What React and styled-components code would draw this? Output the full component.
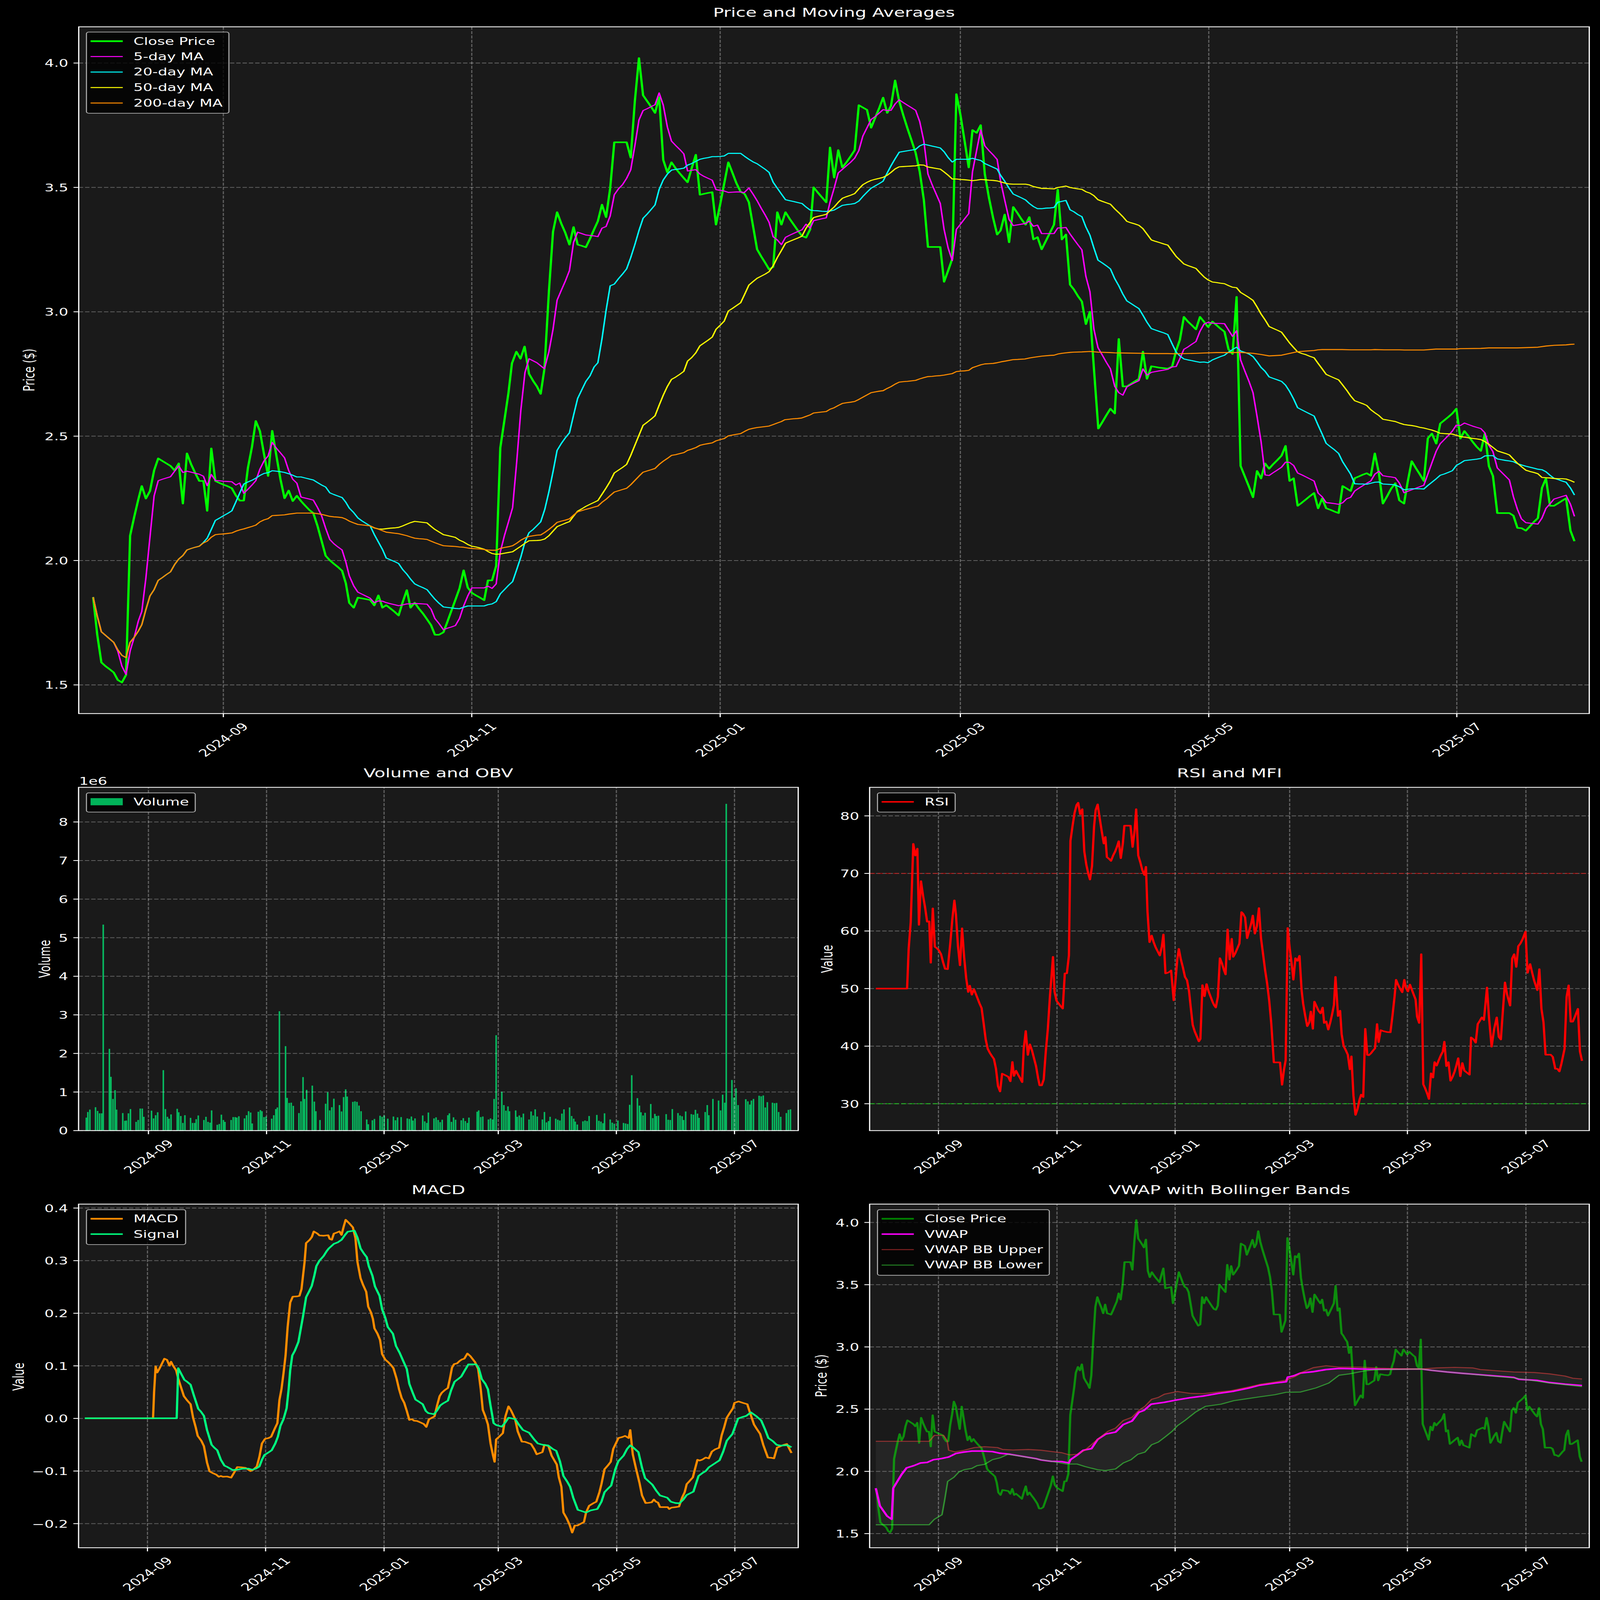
import React from "react";
import styled, { createGlobalStyle } from "styled-components";

const GlobalStyle = createGlobalStyle`
  html, body { margin: 0; padding: 0; background: #000; overflow: hidden; }
  body { font-family: "DejaVu Sans", sans-serif; color: #fff; }
`;

const Viewport = styled.main`
  width: 100vw;
  height: 100vh;
  overflow: hidden;
  background: #000;
`;
const Figure = styled.div`
  display: grid;
  grid-template-columns: 2235px 2235px;
  grid-template-rows: 3100px 1680px 1727px;
  width: 4470px;
  height: 6507px;
  background: #000;
  overflow: hidden;
  transform-origin: 0 0;
`;
const Panel = styled.section`
  position: relative;
  grid-column: ${(p) => (p.$wide ? "1 / span 2" : "auto")};
  display: flex;
  flex-direction: column;
`;
const Title = styled.h2`
  display: flex;
  justify-content: center;
  align-items: flex-end;
  box-sizing: border-box;
  flex: none;
  height: ${(p) => p.$height}px;
  margin: 0;
  padding: 0 ${(p) => p.$right}px 28px ${(p) => p.$left}px;
  font-size: 50px;
  line-height: 58px;
  font-weight: 400;
  white-space: nowrap;
`;
const Plot = styled.svg`
  display: block;
  flex: none;
  overflow: visible;
  text { fill: #fff; font-size: 41.67px; font-family: "DejaVu Sans", sans-serif; }
`;
const Legend = styled.ul`
  position: absolute;
  left: ${(p) => p.$left}px;
  top: ${(p) => p.$top}px;
  display: flex;
  flex-direction: column;
  margin: 0;
  padding: 4px 16px 9px 10px;
  list-style: none;
  background: rgba(0, 0, 0, 0.8);
  border: 3.33px solid #aaa;
  border-radius: 8px;
`;
const LegendRow = styled.li`
  display: flex;
  align-items: center;
  gap: 30px;
  height: 62.8px;
  font-size: 41.67px;
  white-space: nowrap;
`;
const Swatch = styled.span`
  flex: none;
  width: 90px;
  height: ${(p) => p.$size}px;
  background: ${(p) => p.$color};
`;

// crops of the picture the curves were read from: origin and scale
const tile = (ox, oy, fx, fy) => (s) =>
  s.trim().split(/\s+/).map((p) => {
    const [a, b] = p.split(",").map(Number);
    return [ox + a / fx, oy + b / fy];
  });
const T1 = tile(0, 0, 1.0453, 1.0453);
const T2 = tile(1500, 0, 1.0453, 1.0453);
const T3 = tile(3000, 0, 1.0667, 1.0453);
const T4 = tile(0, 1500, 1.0453, 0.98);
const T5 = tile(1500, 1500, 1.0453, 0.98);
const T6 = tile(3000, 1500, 1.0667, 0.98);
const VOL = tile(0, 3100, 0.6969, 0.9224);
const RSI = tile(2220, 3100, 0.6969, 0.9224);
const MAC = tile(0, 4780, 0.6969, 0.9079);
const VWP = tile(2220, 4780, 0.6969, 0.9079);

const close = [
  ...T4(`272,910 284,1060 296,1170 308,1185 320,1197 332,1210 344,1240 356,1250 368,1220 380,665 392,590 404,520 414,467 426,517 438,487 450,405 462,357 474,367 486,377 498,387 510,405 522,377 534,537 546,337 558,380 570,415 582,447 594,447 605,566 617,317 629,447 641,455 653,462 665,468 677,476 689,505 700,525 712,525 724,395 736,310 747,208 759,248 771,340 783,427 795,247 807,345 819,440 831,516 843,485 855,527 867,506 879,527 891,545 903,562 915,575 927,625 939,685 951,745 963,763 975,777 987,790 999,805 1010,855 1020,933 1033,952 1045,912 1057,915 1069,918 1081,921 1093,943 1105,903 1117,952 1128,942 1140,955 1152,968 1164,983 1176,930 1188,882 1199,952 1211,932 1223,955 1235,975 1247,998 1259,1022 1270,1060 1282,1060 1295,1050 1306,1010 1318,965 1330,920 1342,875 1354,803 1366,872 1378,893 1390,903 1402,912 1414,922 1425,843 1437,843 1449,785 1461,315 1473,205 1485,95`),
  ...T1(`1495,1545 1508,1495 1520,1525 1532,1473`),
  ...T4(`1545,20 1557,48`),
  ...T5(`0,70 11,100`),
  ...T2(`22,1568 35,1240 47,985 59,902 71,950 83,990 95,1040 107,965 119,1040 131,1045 143,1051 155,1015 167,975 178,940 190,870 202,923 214,800 226,605 238,605 250,605 262,605 274,670 286,430 298,247 310,405 322,430 334,455 345,480 357,413 369,680 381,733 393,690 405,715 417,737 429,757 440,775 452,715 464,658 476,828 488,824 500,820 512,817 523,955 535,870 547,780 559,690 571,735 583,780 595,815 607,825 619,860 631,960 643,1060 655,1090 667,1118 678,1145 690,1135 702,902 714,955 726,902 738,930 750,955 762,980 774,1003 786,1010 798,975 808,796 820,818 832,838 845,860 856,627 868,755 880,638 892,712 904,690 916,665 928,638 940,447 952,457 964,467 976,543 988,500 1000,458 1011,415 1023,480 1034,450 1046,342 1058,430 1070,490 1082,545 1094,597 1106,650 1118,730 1130,850 1142,1050 1154,1050 1166,1050 1178,1050 1189,1198 1201,1150 1213,1100 1225,400 1237,490 1249,600 1261,712 1272,553 1284,565 1296,532 1308,740 1320,840 1332,925 1344,997 1354,980 1366,912 1379,1030 1391,880 1403,905 1415,932 1427,955 1438,923 1450,1018 1462,1008 1474,1060 1486,1025 1498,990 1510,955 1521,806 1533,1018 1545,997 1557,1210`),
  ...T3(`0,1230 12,1258 24,1282 36,1378 48,1325`),
  ...T6(`60,0 73,238 85,212 97,185 109,159 122,178`),
  ...T3(`134,1441`),
  ...T6(`146,70 158,70 170,60 182,50 194,40`),
  ...T3(`206,1495`),
  ...T6(`218,40`),
  ...T3(`231,1557 243,1560 255,1563 268,1565 280,1567 293,1558 305,1490 316,1445 328,1347 340,1367 352,1383 364,1400 376,1347 388,1368 400,1390 413,1367 425,1382 437,1397 449,1410 461,1485 473,1505 485,1262`),
  ...T6(`497,387 510,430 522,470 534,512 546,407 558,437 570,377 582,398 594,380 607,363 619,346 631,307 643,447 655,436 667,546 680,533 692,520 704,507 716,495 728,556 740,517 752,556 765,562 777,569 789,575 801,467 813,477 825,487 837,436 849,429 861,422 873,416 885,426 897,337 909,415 921,537 934,507 946,477 958,456 970,524 984,537 995,450 1007,368 1019,395 1031,420 1043,447 1055,277 1067,258 1080,298 1092,218 1104,205 1116,192 1128,178 1140,159 1152,278 1164,248 1176,268 1188,290 1200,310 1213,327 1225,258 1237,388 1249,427 1262,575 1274,575 1286,575 1298,575 1310,585 1322,634 1334,635 1347,645 1359,628 1371,610 1383,595 1395,475 1407,437 1419,546 1431,546 1443,536 1455,526 1467,516 1480,645 1492,687`),
];

const ma5 = [
  ...T4(`272,910 284,985 296,1048 308,1062 320,1076 332,1090 344,1125 356,1185 368,1218 380,1125 392,1070 404,1005 414,967 426,835 438,670 450,507 462,446 474,440 486,435 498,430 510,408 522,387 534,413 546,408 558,412 570,416 582,420 594,428 605,466 617,421 629,445 641,446 653,448 665,449 677,450 689,463 700,455 712,496 724,480 736,463 747,446 759,400 771,367 783,347 795,293 807,316 819,335 831,355 843,405 855,440 867,456 879,511 891,515 903,519 915,523 927,552 939,585 951,635 963,680 975,697 987,710 999,722 1010,770 1020,825 1033,865 1045,890 1057,898 1069,906 1081,914 1093,932 1105,925 1117,926 1128,932 1140,936 1152,940 1164,944 1176,941 1188,937 1199,937 1211,935 1223,936 1235,937 1247,938 1259,958 1270,995 1282,1015 1295,1040 1306,1034 1318,1029 1330,1023 1342,995 1354,945 1366,905 1378,873 1390,873 1402,873 1414,873 1425,866 1437,875 1449,857 1461,730 1473,665 1485,610 1497,553 1509,370 1521,165 1533,15`),
  ...T1(`1545,1525`),
  ...T2(`0,1542 11,1555 22,1568 35,1495 47,1400 59,1276 71,1235 83,1195 95,1150 107,1030 119,987 131,993 143,999 155,1001 167,1003 178,1006 190,970 202,963 214,918 226,828 238,803 250,785 262,758 274,722 286,620 298,510 310,470 322,462 334,453 345,445 357,395 369,447 381,540 393,600 405,618 417,635 429,654 440,727 452,724 464,721 476,740 488,750 500,758 512,766 523,806 535,809 547,812 559,818 571,817 583,816 595,816 605,819 619,799 631,825 643,853 655,885 667,915 678,945 690,1007 702,1020 714,1040 726,1009 738,1000 750,992 762,984 774,977 786,953 798,970 808,938 820,934 832,930 845,926 856,860 868,800 880,735 892,720 904,705 916,690 928,672 940,640 952,578 964,543 976,508 988,495 1000,480 1011,466 1023,470 1034,469 1046,442 1058,424 1070,436 1082,447 1094,458 1106,469 1118,517 1130,600 1142,740 1154,785 1166,825 1178,865 1189,975 1201,1055 1213,1108 1225,975 1237,953 1249,930 1261,908 1272,730 1284,640 1296,552 1308,620 1320,640 1332,658 1344,678 1354,770 1366,850 1379,933 1391,959 1403,956 1415,953 1427,950 1438,940 1450,962 1462,957 1474,993 1486,993 1498,993 1510,993 1521,969 1533,969 1545,967 1557,995`),
  ...T3(`0,1017 12,1040 24,1062 36,1175 48,1240 60,1400 72,1478 85,1510 97,1540`),
  ...T6(`109,0 122,70 134,95 146,105 158,72 170,63 182,55 194,47 206,0 218,25 231,14 243,11 255,8 268,5 280,2`),
  ...T3(`293,1560 305,1558 316,1525 328,1485 340,1475 352,1463 364,1452 376,1408 388,1378 400,1370 413,1374 425,1375 437,1375 449,1376 461,1403 473,1430 485,1406 497,1530`),
  ...T6(`510,10 522,50 534,95 546,190 558,290 570,423 582,425 594,414 607,403 619,392 631,372 643,373 655,385 667,415 680,423 692,431 704,439 716,447 728,495 740,510 752,533 765,535 777,537 789,540 801,534 813,518 825,512 837,487 849,476 861,466 873,456 885,447 897,420 909,408 921,426 934,429 946,431 958,434 970,455 984,494 995,488 1007,482 1019,476 1031,470 1043,464 1055,420 1067,375 1080,328 1092,298 1104,282 1116,266 1128,248 1140,224 1152,226 1164,216 1176,222 1188,228 1200,233 1213,238 1225,255 1237,305 1249,330 1262,395 1274,411 1286,427 1298,443 1310,510 1322,560 1334,598 1347,613 1359,615 1371,617 1383,619 1395,595 1407,556 1419,538 1431,519 1443,514 1455,509 1467,504 1480,540 1492,588`),
];

const ma20 = [
  ...T4(`272,910 284,985 296,1048 308,1062 320,1076 332,1090 344,1120 356,1142 368,1151 380,1090 392,1070 404,1045 414,1020 426,960 438,905 450,880 462,843 474,832 486,820 498,809 510,780 522,758 534,744 546,722 558,716 570,711 582,707 594,692 605,675 617,640 629,604 641,595 653,585 665,576 677,566 689,530 700,495 712,459 724,451 736,444 747,436 759,425 771,417 783,414 795,406 807,408 819,410 831,413 843,418 855,424 867,431 879,431 891,435 903,439 915,443 927,453 939,463 951,471 963,494 975,501 987,507 999,513 1010,532 1020,555 1033,573 1045,594 1057,606 1069,616 1081,626 1093,660 1105,690 1117,720 1128,754 1140,761 1152,768 1164,776 1176,800 1188,818 1199,838 1211,857 1223,865 1235,872 1247,880 1259,900 1270,918 1282,934 1295,949 1306,951 1318,953 1330,955 1342,956 1354,950 1366,945 1378,945 1390,945 1402,945 1414,945 1425,940 1437,937 1449,928 1461,897 1473,880 1485,863 1497,848 1509,800 1521,750 1533,690 1545,653 1557,640`),
  ...T5(`0,625 11,610 23,560 35,490 47,410 59,325 71,298 83,275 95,255 107,185 119,118 131,84 143,50 155,28`),
  ...T2(`167,1560 178,1542 190,1440 202,1320 214,1215 226,1208 238,1185 250,1165 262,1143 274,1095 286,1040 298,980 310,928 322,910 334,890 345,871 357,805 369,765 381,740 393,723 405,720 417,718 429,715 440,702 452,695 464,686 476,677 488,673 500,670 512,666 523,666 535,665 547,663 559,652 571,652 583,652 595,652 607,665 619,677 631,688 643,696 655,708 667,720 678,733 690,775 702,800 714,825 726,849 738,853 750,857 762,861 774,865 786,880 798,893 808,895 820,896 832,898 845,899 856,897 868,893 880,883 892,873 904,870 916,868 928,865 940,855 952,835 964,817 976,800 988,790 1000,780 1011,770 1023,735 1034,705 1046,675 1058,647 1070,644 1082,641 1094,638 1106,635 1118,620 1130,613 1142,617 1154,621 1166,625 1178,629 1189,645 1201,670 1213,689 1225,677 1237,677 1249,677 1261,677 1272,673 1284,678 1296,682 1308,695 1320,703 1332,711 1344,719 1354,745 1366,770 1379,800 1391,825 1403,833 1415,841 1427,850 1438,865 1450,878 1462,887 1474,887 1486,885 1498,884 1510,882 1521,860 1533,856 1545,852 1557,892`),
  ...T3(`0,900 12,912 24,921 36,965 48,1000 60,1055 72,1106 85,1118 97,1130 109,1143 122,1185 134,1215 146,1250 158,1279 170,1290 182,1301 194,1312 206,1340 218,1370 231,1397 243,1403 255,1409 268,1415 280,1422 293,1462 305,1497 316,1513 328,1526 340,1530 352,1533 364,1537 376,1540 388,1539 400,1542 413,1530 425,1523 437,1516 449,1510 461,1497 473,1486 485,1476 497,1492 510,1498 522,1505 534,1516 546,1538 558,1562`),
  ...T6(`570,10 582,32 594,38 607,44 619,50 631,65 643,90 655,120 667,155 680,164 692,172 704,180 716,188 728,225 740,260 752,297 765,311 777,323 789,337 801,370 813,395 825,420 837,458 849,459 861,459 873,460 885,456 897,452 909,451 921,459 934,460 946,461 958,463 970,470 984,482 995,480 1007,478 1019,478 1031,478 1043,479 1055,465 1067,452 1080,438 1092,424 1104,419 1116,413 1128,406 1140,385 1152,376 1164,366 1176,364 1188,362 1200,360 1213,357 1225,347 1237,346 1249,346 1262,359 1274,362 1286,365 1298,367 1310,370 1322,378 1334,383 1347,388 1359,392 1371,396 1383,400 1395,402 1407,410 1419,424 1431,436 1443,441 1455,447 1467,452 1480,475 1492,503`),
];

const ma200 = [
  ...T4(`272,910 284,985 296,1048 308,1062 320,1076 332,1090 344,1120 356,1142 368,1151 380,1090 392,1070 404,1045 414,1020 426,960 438,905 450,880 462,843 474,832 486,820 498,809 510,780 522,758 534,744 546,722 558,716 570,711 582,707 594,694 605,687 617,671 629,661 641,659 653,658 665,656 677,654 689,647 700,642 712,638 724,633 736,628 747,623 759,610 771,602 783,597 795,585 807,584 819,583 831,582 843,579 855,577 867,575 879,575 891,575 903,575 915,575 927,577 939,580 951,584 963,588 975,590 987,591 999,593 1010,599 1020,607 1033,614 1045,620 1057,622 1069,624 1081,626 1093,633 1105,639 1117,645 1128,651 1140,653 1152,655 1164,657 1176,661 1188,665 1199,670 1211,675 1223,677 1235,678 1247,680 1259,687 1270,693 1282,699 1295,705 1306,706 1318,707 1330,708 1342,710 1354,711 1366,714 1378,716 1390,717 1402,718 1414,720 1425,722 1437,723 1449,723 1461,716 1473,712 1485,709 1497,705 1509,695 1521,683 1533,674 1545,668`),
  ...T5(`0,663 11,662 23,652 35,640 47,627 59,612 71,607 83,603 95,598 107,583 119,570 131,565 143,560 155,556 167,551 178,547 190,532 202,520 214,505 226,491 238,486 250,481 262,476 274,462 286,445 298,428 310,412 322,407 334,402 345,397 357,381 369,368 381,357 393,345 405,342 417,338 429,334 440,325 452,320 464,314 476,305 488,301 500,298 512,295 523,287 535,282 547,278 559,267 571,264 583,261 595,258 607,249 619,241 631,237 643,234 655,232 667,230 678,228 690,222 702,216 714,210 724,203 737,201 749,199 761,198 773,196 785,190 797,184 808,176 820,174 832,172 845,170 856,161 868,155 880,146 892,138 904,135 916,133 928,130 940,122 952,113 964,104 976,95 988,92 1000,89 1011,87 1023,78 1034,71 1046,61 1058,53 1070,51 1082,50 1094,48 1106,46 1118,40 1130,35 1142,31 1154,30 1166,28 1178,27 1189,25 1201,22 1213,19 1225,11 1237,9 1249,8 1261,6`),
  ...T2(`1272,1563 1284,1557 1296,1551 1308,1547 1320,1546 1332,1545 1344,1542 1356,1538 1368,1535 1390,1529 1404,1528 1425,1526 1438,1522 1450,1519 1474,1514 1498,1511 1510,1510 1521,1505 1533,1502 1545,1500 1557,1498`),
  ...T3(`0,1497 24,1496 48,1494 72,1497 108,1499 122,1500 158,1501 206,1502 231,1503 280,1503 305,1504 364,1502 400,1500 425,1499 473,1499 497,1498 534,1502 558,1507 582,1513 619,1510 631,1506 667,1495 716,1490 728,1487 740,1486 800,1486 825,1487 885,1487 897,1486 925,1487 970,1487 985,1488 1043,1488 1079,1484 1140,1484 1152,1482 1213,1481 1237,1479 1322,1479 1383,1476 1407,1471 1431,1468 1467,1466 1480,1464 1492,1463`),
];

const ma50 = [
  ...T4(`1081,626 1093,634 1105,638 1117,639 1128,637 1140,635 1152,634 1164,632 1176,626 1188,619 1199,613 1211,608 1223,610 1235,612 1247,614 1259,628 1270,640 1282,650 1295,661 1306,664 1318,668 1330,672 1342,683 1354,690 1366,700 1378,707 1390,710 1402,714 1414,719 1425,728 1437,736 1449,739 1461,738 1473,735 1485,732 1497,729 1509,718 1521,707 1533,695 1545,685`),
  ...T5(`0,684 11,683 23,678 35,665 47,647 59,629 71,622 83,615 95,609 107,587 119,567 131,558 143,548 155,540 167,532 178,525 190,500 202,475 214,448 226,415 238,404 250,393 262,381 274,345 286,305 298,265 310,225 322,213 334,200 345,187 357,145 369,105 381,70 393,42 405,33 417,22 429,10`),
  ...T2(`440,1535 452,1520 464,1500 476,1470 488,1458 500,1446 512,1433 523,1400 535,1383 547,1365 559,1322 571,1311 583,1299 595,1287 607,1250 619,1212 631,1197 643,1183 655,1174 667,1165 678,1155 690,1130 702,1095 714,1065 726,1034 738,1026 750,1019 762,1012 774,1004 786,970 798,945 808,925 820,920 832,916 845,911 856,895 868,880 880,860 892,843 904,836 916,830 928,823 940,803 952,785 964,775 976,767 988,762 1000,758 1011,754 1023,745 1034,733 1046,718 1058,709 1070,708 1082,707 1094,706 1106,705 1118,701 1130,702 1142,710 1154,713 1166,716 1178,719 1189,731 1201,745 1213,761 1225,761 1237,763 1249,764 1261,766 1272,768 1284,766 1296,763 1308,764 1320,766 1332,767 1344,769 1354,773 1366,778 1379,782 1391,783 1403,783 1415,783 1427,783 1438,786 1450,793 1462,797 1474,801 1486,801 1498,802 1510,803 1521,797 1533,794 1545,791 1557,797`),
  ...T3(`0,800 12,803 24,805 36,815 48,821 60,832 72,849 85,856 97,862 109,868 122,888 134,904 146,921 158,941 170,947 182,952 194,958 206,972 218,995 231,1020 243,1026 255,1031 268,1037 280,1042 293,1067 305,1090 316,1105 328,1122 340,1129 352,1135 364,1141 376,1160 388,1177 400,1190 413,1199 425,1201 437,1204 449,1206 461,1214 473,1221 485,1223 497,1243 510,1254 522,1265 534,1277 546,1305 558,1335 570,1360 582,1388 594,1396 607,1404 619,1412 631,1435 643,1458 655,1477 667,1496 680,1503 692,1508 704,1515 716,1521 728,1545`),
  ...T6(`740,0 752,22 765,30 777,37 789,44 801,64 813,85 825,108 837,127 849,133 861,139 873,146 885,163 897,175 909,186 921,201 934,204 946,207 958,210 970,216 984,222 995,224 1007,226 1019,229 1031,233 1043,236 1055,240 1067,244 1080,250 1092,257 1104,258 1116,259 1128,260 1140,265 1152,270 1164,272 1176,275 1188,277 1200,279 1213,282 1225,290 1237,301 1249,313 1262,327 1274,332 1286,337 1298,343 1310,360 1322,376 1334,390 1347,404 1359,409 1371,413 1383,418 1395,433 1407,434 1419,435 1431,437 1443,438 1455,438 1467,439 1480,445 1492,452`),
];

const bars = VOL(`168,1333 171,1312 175,1303 186,1294 190,1308 194,1317 198,1317 201,609 213,1075 216,1180 220,1263 224,1230 227,1303 239,1316 243,1345 246,1344 250,1317 254,1301 265,1349 269,1342 273,1299 277,1299 280,1330 295,1307 299,1336 303,1324 307,1313 318,1155 322,1301 326,1330 329,1337 333,1321 345,1300 348,1313 352,1327 356,1353 360,1324 371,1334 375,1353 379,1353 382,1339 386,1325 397,1342 401,1330 405,1349 409,1352 412,1306 423,1360 427,1357 431,1322 435,1342 438,1349 450,1342 454,1331 458,1331 461,1333 465,1328 476,1336 480,1324 484,1309 488,1314 491,1355 503,1311 507,1305 510,1309 514,1331 518,1329 529,1337 533,1324 537,1301 540,1295 544,934 556,1065 559,1259 563,1278 567,1277 571,1289 582,1316 586,1272 590,1181 593,1263 597,1229 608,1213 612,1273 615,1309 623,1342 634,1281 638,1238 642,1306 646,1294 650,1262 661,1286 665,1310 669,1256 673,1227 676,1254 687,1274 691,1272 695,1274 699,1288 703,1309 714,1340 717,1358 725,1343 729,1338 740,1326 744,1330 748,1325 755,1337 766,1329 770,1343 774,1332 781,1331 793,1336 797,1338 801,1329 804,1344 808,1336 823,1325 827,1347 831,1353 834,1314 845,1336 849,1332 853,1342 857,1350 861,1341 872,1324 875,1317 879,1349 883,1332 887,1341 898,1343 902,1335 906,1346 910,1353 913,1333 929,1311 932,1306 936,1331 940,1329 951,1340 955,1336 959,1340 962,1263 966,1024 977,1236 981,1286 985,1307 989,1291 992,1309 1004,1306 1007,1330 1011,1325 1015,1332 1019,1318 1030,1340 1034,1310 1038,1325 1042,1302 1046,1329 1056,1340 1060,1312 1064,1351 1068,1346 1071,1330 1082,1337 1086,1341 1090,1344 1094,1318 1098,1302 1109,1295 1113,1327 1117,1337 1120,1348 1124,1359 1135,1347 1139,1344 1143,1346 1147,1327 1162,1323 1166,1345 1170,1348 1174,1354 1177,1317 1188,1340 1192,1352 1196,1356 1203,1344 1214,1353 1218,1355 1222,1357 1226,1285 1230,1174 1241,1260 1245,1288 1248,1313 1252,1325 1256,1315 1267,1282 1271,1335 1275,1319 1278,1327 1282,1326 1297,1320 1301,1341 1305,1342 1309,1301 1320,1316 1324,1325 1328,1328 1331,1342 1335,1310 1346,1320 1350,1322 1354,1304 1358,1318 1361,1334 1373,1312 1377,1286 1380,1324 1388,1263 1399,1269 1403,1306 1407,1247 1411,1277 1414,156 1425,1192 1429,1258 1433,1223 1437,1286 1452,1264 1456,1272 1460,1284 1463,1269 1467,1263 1478,1251 1482,1253 1486,1250 1490,1295 1494,1275 1504,1277 1508,1279 1512,1278 1516,1312 1520,1330 1531,1316 1535,1304 1539,1302`);

const rsi = RSI(`158,849 219,849 222,700 226,600 231,306 235,350 239,324 242,610 246,446 250,500 254,545 258,598 262,597 265,752 269,548 273,692 277,698 281,706 285,720 289,750 293,775 298,776 303,680 307,590 311,518 314,570 318,690 322,762 326,623 330,730 334,810 338,862 341,838 345,872 349,851 353,870 357,890 360,905 364,922 368,980 372,1040 376,1075 380,1090 384,1102 388,1113 392,1150 396,1215 400,1235 404,1168 408,1172 412,1176 416,1180 420,1197 424,1124 427,1177 431,1157 435,1172 439,1185 443,1200 446,1075 450,1008 454,1098 458,1058 462,1080 466,1110 470,1140 474,1185 477,1212 481,1212 485,1190 489,1085 493,1000 497,880 503,730 506,860 510,895 514,905 518,915 522,924 526,792 530,792 534,725 537,295 541,240 545,190 549,160 552,152 556,195 560,176 564,335 568,385 572,420 575,440 579,390 583,240 586,180 590,158 594,210 598,260 602,305 605,280 608,356 612,362 616,370 620,350 624,335 628,315 631,296 635,360 639,305 642,238 646,238 650,238 654,238 658,318 662,255 665,176 669,350 673,375 677,405 681,423 684,392 687,560 691,675 695,650 699,675 703,695 707,710 711,725 715,690 718,646 722,792 726,790 730,786 733,781 738,893 741,830 745,740 748,700 752,740 756,770 760,805 764,818 768,860 771,915 775,985 779,1010 783,1028 787,1047 790,1038 794,836 798,878 802,832 806,860 810,880 814,900 817,912 820,920 824,880 828,735 832,755 836,780 839,796 843,627 847,740 851,662 854,730 858,716 862,698 866,680 870,562 873,568 877,582 881,660 885,632 889,605 892,575 896,643 900,615 904,547 908,660 912,720 916,780 920,830 924,895 928,980 933,1126 937,1126 941,1126 945,1126 949,1210 953,1150 956,1118 960,622 964,700 968,760 971,816 975,735 979,745 983,726 987,855 990,905 994,950 998,990 1002,975 1005,935 1009,1000 1012,898 1016,915 1020,932 1024,942 1028,920 1031,978 1035,972 1039,1003 1043,975 1047,940 1050,910 1053,805 1058,952 1062,932 1065,1020 1069,1065 1073,1080 1077,1097 1081,1152 1084,1103 1088,1250 1092,1323 1096,1300 1100,1265 1103,1247 1107,1256 1111,1000 1115,1098 1118,1099 1122,1092 1126,1082 1130,1073 1134,982 1137,1050 1141,1005 1145,1008 1149,1010 1153,1012 1160,1013 1164,950 1168,880 1171,816 1175,835 1179,850 1183,863 1187,816 1190,845 1194,860 1198,834 1202,855 1206,875 1209,890 1212,955 1216,978 1220,720 1224,1208 1228,1225 1232,1245 1235,1263 1239,1167 1243,1183 1246,1125 1250,1138 1254,1118 1258,1100 1262,1085 1265,1048 1269,1140 1273,1125 1277,1195 1281,1180 1285,1160 1288,1140 1292,1110 1296,1178 1300,1128 1304,1157 1308,1163 1314,1172 1317,1032 1322,1040 1326,1052 1330,982 1334,970 1338,957 1342,967 1348,845 1352,960 1357,1067 1362,1000 1367,957 1371,1030 1375,1040 1379,930 1383,826 1387,870 1393,913 1397,736 1401,720 1405,768 1409,690 1413,680 1417,665 1423,635 1427,790 1432,757 1436,790 1440,820 1446,855 1450,776 1454,925 1458,975 1462,1097 1466,1097 1472,1097 1476,1105 1481,1150 1485,1150 1489,1160 1493,1130 1499,1075 1503,880 1507,837 1511,973 1515,973 1519,955 1525,925 1529,1085 1533,1120`);

const macd = MAC(`165,897 298,897 300,800 303,705 306,728 310,715 314,700 320,677 325,681 330,703 333,688 337,703 343,720 347,750 352,780 358,815 364,830 371,845 376,895 381,930 385,962 392,980 397,1000 403,1060 408,1093 415,1100 421,1105 426,1113 430,1110 434,1113 442,1112 450,1116 456,1097 462,1077 470,1078 478,1080 488,1092 493,1087 500,1075 505,1040 510,990 516,973 523,970 528,965 535,935 540,915 544,830 548,790 552,730 556,665 560,560 565,470 570,448 578,447 583,445 587,420 593,320 596,250 603,238 607,228 611,207 618,215 622,222 630,223 639,221 642,235 646,238 650,215 656,211 661,207 665,220 669,190 673,164 680,177 687,192 692,232 696,320 702,380 707,405 713,430 717,485 722,505 726,530 729,565 735,585 740,608 744,660 750,680 756,690 762,702 766,712 772,750 777,790 782,822 787,840 792,870 797,903 802,900 806,906 812,907 818,912 825,918 830,929 835,901 840,896 846,890 851,850 856,815 860,803 866,793 872,785 876,750 880,710 884,697 890,694 895,685 899,680 904,677 910,658 916,668 925,690 931,715 936,790 940,866 945,890 950,920 955,990 960,1035 963,1058 966,975 972,965 979,952 984,890 990,853 995,868 1003,900 1008,945 1016,983 1022,984 1034,992 1040,1010 1045,1030 1056,1022 1060,995 1068,1000 1074,1035 1084,1068 1088,1115 1093,1150 1097,1245 1103,1265 1109,1290 1114,1319 1119,1293 1124,1293 1130,1287 1137,1280 1141,1245 1147,1220 1154,1212 1161,1205 1167,1170 1171,1140 1177,1085 1184,1070 1189,1058 1194,1010 1199,990 1204,970 1212,966 1217,962 1224,970 1227,940 1232,1030 1238,1080 1245,1135 1250,1182 1257,1210 1263,1209 1269,1207 1273,1197 1277,1205 1281,1208 1285,1225 1294,1225 1300,1225 1303,1232 1307,1227 1315,1225 1322,1223 1328,1190 1333,1170 1337,1140 1342,1130 1349,1115 1353,1085 1358,1050 1362,1053 1367,1050 1374,1042 1380,1045 1386,1020 1392,1012 1400,1006 1405,960 1410,930 1415,895 1420,880 1427,860 1430,840 1438,835 1446,840 1455,845 1460,875 1468,920 1473,935 1480,955 1486,995 1495,1042 1502,1043 1507,1045 1513,1005 1520,1000 1526,995 1532,992 1541,1025`);

const signal = MAC(`165,897 344,897 347,712 352,730 359,755 365,763 371,773 377,810 386,862 391,872 397,888 403,940 412,995 417,1005 423,1015 430,1050 437,1072 443,1077 453,1088 460,1087 472,1083 484,1083 491,1087 498,1083 505,1075 510,1050 515,1032 522,1024 529,1015 536,990 541,965 546,925 552,900 558,860 562,790 565,720 569,665 574,648 581,615 590,520 596,450 602,428 607,408 612,370 616,335 622,315 630,298 636,280 640,270 650,253 658,247 665,238 671,222 677,208 690,204 696,230 702,270 709,290 714,302 718,335 725,370 730,410 739,445 744,495 750,525 755,560 765,585 771,630 778,655 785,685 792,715 797,770 804,805 809,828 815,835 823,845 829,870 834,878 845,882 851,868 857,850 862,843 872,832 878,795 885,762 892,752 898,743 905,720 912,698 927,698 932,712 938,752 945,770 950,790 955,850 961,915 966,922 977,928 984,912 990,895 1003,900 1010,920 1018,940 1030,950 1040,975 1047,990 1057,995 1067,997 1076,1010 1083,1017 1090,1055 1097,1110 1104,1130 1110,1150 1116,1190 1125,1235 1130,1238 1141,1245 1150,1237 1163,1232 1171,1205 1177,1170 1183,1158 1190,1145 1198,1085 1204,1055 1214,1035 1221,1010 1227,997 1233,1005 1243,1022 1250,1080 1256,1118 1263,1130 1270,1142 1278,1165 1285,1182 1299,1190 1306,1205 1315,1210 1323,1211 1330,1198 1337,1180 1350,1168 1360,1110 1367,1100 1374,1092 1380,1078 1393,1062 1401,1052 1408,1020 1415,980 1426,955 1437,898 1446,892 1453,888 1462,875 1473,890 1482,905 1490,940 1496,970 1505,982 1512,995 1520,998 1533,996 1541,1004`);

const vwap = VWP(`158,1155 166,1220 180,1258 189,1270 192,1155 200,1130 208,1105 218,1080 232,1072 245,1062 258,1060 270,1050 285,1046 300,1040 314,1027 328,1022 345,1018 365,1018 385,1020 400,1026 420,1030 445,1038 470,1046 480,1051 500,1056 520,1057 534,1062 537,1050 550,1033 562,1015 578,1009 590,975 606,955 625,948 640,920 657,907 670,875 680,868 694,845 720,838 745,829 770,821 795,815 825,805 855,797 885,785 905,775 935,767 957,762 960,745 972,740 985,730 1010,725 1035,717 1060,713 1090,714 1120,716 1160,716 1220,715 1240,720 1270,726 1300,731 1340,737 1400,746 1410,753 1445,757 1470,765 1500,771 1533,776`);
const bbUpper = VWP(`158,982 262,982 272,960 290,960 297,980 300,1015 312,1021 330,1015 350,1005 370,1002 395,1005 405,1012 425,1014 455,1012 480,1015 510,1022 520,1024 535,1032 550,1030 565,1015 590,975 610,945 625,933 640,905 657,893 672,865 682,853 695,827 708,820 720,808 745,798 770,805 795,806 825,800 850,795 880,783 905,772 935,763 957,756 975,742 988,727 1010,710 1035,703 1060,708 1100,708 1140,712 1175,714 1220,715 1250,711 1285,709 1320,711 1335,717 1370,722 1400,726 1440,728 1470,733 1500,741 1515,749 1533,752`);
const bbLower = VWP(`158,1290 262,1290 272,1270 287,1253 292,1200 298,1130 310,1115 320,1095 330,1087 345,1082 355,1072 370,1067 385,1050 400,1043 415,1030 440,1037 470,1047 500,1056 530,1066 550,1066 565,1075 590,1087 605,1090 625,1084 640,1062 655,1050 668,1030 682,1022 695,995 708,985 722,965 735,945 745,925 760,905 780,875 800,853 830,845 855,832 880,825 905,818 935,810 957,801 985,800 1015,785 1040,767 1060,738 1080,733 1110,722 1130,718 1220,715 1240,720 1270,726 1300,731 1340,738 1400,748 1445,760 1470,767 1500,773 1533,780`);

// same close series, moved from the price panel onto the VWAP panel scale
const vwapClose = close.map(([x, y]) => {
  const day = (x - 624) / 11.377;
  const price = 4 - (y - 256.4) / 1011.6;
  return [2621.8 + day * 5.416, 4971.6 + (4 - price) * 506.16];
});

const MONTHS = ["2024-09", "2024-11", "2025-01", "2025-03", "2025-05", "2025-07"];
const pts = (list) => list.map(([x, y]) => `${x.toFixed(1)},${y.toFixed(1)}`).join(" ");
const ticks = (labels, first, step) => labels.map((label, i) => ({ label, y: first + i * step }));

const PANELS = {
  price: {
    origin: [0, 0], size: [4470, 3100], titleH: 109, title: "Price and Moving Averages", wide: true,
    box: [220, 109, 4440, 2902], pad: [220, 30],
    xTicks: [624, 1318, 2012, 2683, 3377, 4070],
    yTicks: ticks(["4.0", "3.5", "3.0", "2.5", "2.0", "1.5"], 256.4, 505.8),
    yLabel: { text: "Price ($)", x: 96, y: 1505 },
    lines: [
      { d: close, color: "#00ff00", w: 6.25 },
      { d: ma5, color: "#ff00ff", w: 4.17 },
      { d: ma20, color: "#00ffff", w: 4.17 },
      { d: ma50, color: "#ffff00", w: 4.17 },
      { d: ma200, color: "#ff8c00", w: 4.17 },
    ],
    legend: {
      left: 240, top: 129,
      rows: [
        ["Close Price", "#00ff00", 6.25],
        ["5-day MA", "#ff00ff", 4.17],
        ["20-day MA", "#00ffff", 4.17],
        ["50-day MA", "#ffff00", 4.17],
        ["200-day MA", "#ff8c00", 4.17],
      ],
    },
  },
  volume: {
    origin: [0, 3100], size: [2235, 1680], titleH: 102, title: "Volume and OBV",
    box: [219.5, 3202, 2230, 4598], pad: [219.5, 5],
    xTicks: [414.7, 744.7, 1073, 1392, 1722, 2052],
    yTicks: ticks(["8", "7", "6", "5", "4", "3", "2", "1", "0"], 3342.8, 156.9),
    yLabel: { text: "Volume", x: 140, y: 3900 },
    offset: { text: "1e6", x: 221, y: 3191 },
    bars,
    lines: [],
    legend: { left: 240, top: 122.5, rows: [["Volume", "rgba(0,255,127,0.7)", 29]] },
  },
  rsi: {
    origin: [2235, 3100], size: [2235, 1680], titleH: 102, title: "RSI and MFI",
    box: [2429.5, 3202, 4440, 4598], pad: [194.5, 30],
    xTicks: [2621.8, 2953, 3283, 3603, 3932, 4263],
    yTicks: ticks(["80", "70", "60", "50", "40", "30"], 3318, 234.14),
    yLabel: { text: "Value", x: 2326, y: 3900 },
    levels: [
      { y: 3552.1, color: "rgba(255,0,0,0.5)" },
      { y: 4488.7, color: "rgba(0,255,0,0.5)" },
    ],
    lines: [{ d: rsi, color: "#ff0000", w: 6.25 }],
    legend: { left: 215, top: 122.5, rows: [["RSI", "#ff0000", 6.25]] },
  },
  macd: {
    origin: [0, 4780], size: [2235, 1727], titleH: 117, title: "MACD",
    box: [219.5, 4897, 2230, 6294.5], pad: [219.5, 5],
    xTicks: [412, 742, 1073, 1392, 1723, 2053],
    yTicks: ticks(["0.4", "0.3", "0.2", "0.1", "0.0", "\u22120.1", "\u22120.2"], 4913, 213.9),
    yLabel: { text: "Value", x: 67, y: 5599 },
    lines: [
      { d: macd, color: "#ff8c00", w: 6.25 },
      { d: signal, color: "#00ff7f", w: 6.25 },
    ],
    legend: {
      left: 240, top: 138,
      rows: [
        ["MACD", "#ff8c00", 6.25],
        ["Signal", "#00ff7f", 6.25],
      ],
    },
  },
  vwap: {
    origin: [2235, 4780], size: [2235, 1727], titleH: 117, title: "VWAP with Bollinger Bands",
    box: [2429.5, 4897, 4440, 6294.5], pad: [194.5, 30],
    xTicks: [2621.8, 2953, 3283, 3603, 3932, 4263],
    yTicks: ticks(["4.0", "3.5", "3.0", "2.5", "2.0", "1.5"], 4971.6, 253.08),
    yLabel: { text: "Price ($)", x: 2309, y: 5595 },
    band: [...bbUpper, ...[...bbLower].reverse()],
    lines: [
      { d: vwapClose, color: "rgba(0,255,0,0.5)", w: 6.25 },
      { d: vwap, color: "#ff00ff", w: 6.25 },
      { d: bbUpper, color: "rgba(255,68,68,0.5)", w: 4.17 },
      { d: bbLower, color: "rgba(68,255,68,0.5)", w: 4.17 },
    ],
    legend: {
      left: 215, top: 138,
      rows: [
        ["Close Price", "#008000", 6.25],
        ["VWAP", "#ff00ff", 6.25],
        ["VWAP BB Upper", "#802222", 4.17],
        ["VWAP BB Lower", "#228022", 4.17],
      ],
    },
  },
};

function Chart({ cfg }) {
  const [left, top, right, bottom] = cfg.box;
  const [ox, oy] = cfg.origin;
  const [w, h] = cfg.size;
  const svgH = h - cfg.titleH;
  return (
    <Plot width={w} height={svgH} viewBox={`${ox} ${oy + cfg.titleH} ${w} ${svgH}`}>
      <rect x={left} y={top} width={right - left} height={bottom - top} fill="#1a1a1a" />
      {cfg.band && <polygon points={pts(cfg.band)} fill="rgba(255,255,255,0.05)" />}
      {cfg.bars && cfg.bars.map(([x, y], i) => (
        <rect key={i} x={x - 2.15} y={y} width={4.3} height={bottom - y} fill="rgba(0,255,127,0.7)" />
      ))}
      <g stroke="rgba(255,255,255,0.3)" strokeWidth="3.33" strokeDasharray="12.3 5.3">
        {cfg.xTicks.map((x) => <line key={x} x1={x} x2={x} y1={bottom} y2={top} />)}
        {cfg.yTicks.map((t) => <line key={t.label} x1={left} x2={right} y1={t.y} y2={t.y} />)}
      </g>
      {cfg.levels && cfg.levels.map((l) => (
        <line key={l.y} x1={left} x2={right} y1={l.y} y2={l.y} stroke={l.color} strokeWidth="4.17" strokeDasharray="15.4 6.67" />
      ))}
      {cfg.lines.map((l, i) => (
        <polyline key={i} points={pts(l.d)} fill="none" stroke={l.color} strokeWidth={l.w} strokeLinejoin="round" />
      ))}
      <rect x={left} y={top} width={right - left} height={bottom - top} fill="none" stroke="#fff" strokeWidth="3.33" />
      <g stroke="#fff" strokeWidth="3.33">
        {cfg.xTicks.map((x) => <line key={x} x1={x} x2={x} y1={bottom} y2={bottom + 14.6} />)}
        {cfg.yTicks.map((t) => <line key={t.label} x1={left - 14.6} x2={left} y1={t.y} y2={t.y} />)}
      </g>
      {cfg.yTicks.map((t) => (
        <text key={t.label} x={left - 29.2} y={t.y + 16} textAnchor="end">{t.label}</text>
      ))}
      {cfg.xTicks.map((x, i) => (
        <text key={x} x={x} y={bottom + 106 + 15} textAnchor="middle" transform={`rotate(-45 ${x} ${bottom + 106})`}>
          {MONTHS[i]}
        </text>
      ))}
      <text x={cfg.yLabel.x} y={cfg.yLabel.y} textAnchor="middle" transform={`rotate(-90 ${cfg.yLabel.x} ${cfg.yLabel.y})`}>
        {cfg.yLabel.text}
      </text>
      {cfg.offset && <text x={cfg.offset.x} y={cfg.offset.y}>{cfg.offset.text}</text>}
    </Plot>
  );
}

function ChartPanel({ cfg }) {
  return (
    <Panel $wide={cfg.wide}>
      <Title $height={cfg.titleH} $left={cfg.pad[0]} $right={cfg.pad[1]}>{cfg.title}</Title>
      <Chart cfg={cfg} />
      <Legend $left={cfg.legend.left} $top={cfg.legend.top}>
        {cfg.legend.rows.map(([label, color, size]) => (
          <LegendRow key={label}>
            <Swatch $color={color} $size={size} />
            {label}
          </LegendRow>
        ))}
      </Legend>
    </Panel>
  );
}

export default function App() {
  // the browser window can come out smaller than the figure, so fit the figure to it
  const fit = `scale(${window.innerWidth / 4470}, ${window.innerHeight / 6507})`;
  return (
    <>
      <GlobalStyle />
      <Viewport>
        <Figure style={{ transform: fit }}>
          <ChartPanel cfg={PANELS.price} />
          <ChartPanel cfg={PANELS.volume} />
          <ChartPanel cfg={PANELS.rsi} />
          <ChartPanel cfg={PANELS.macd} />
          <ChartPanel cfg={PANELS.vwap} />
        </Figure>
      </Viewport>
    </>
  );
}
